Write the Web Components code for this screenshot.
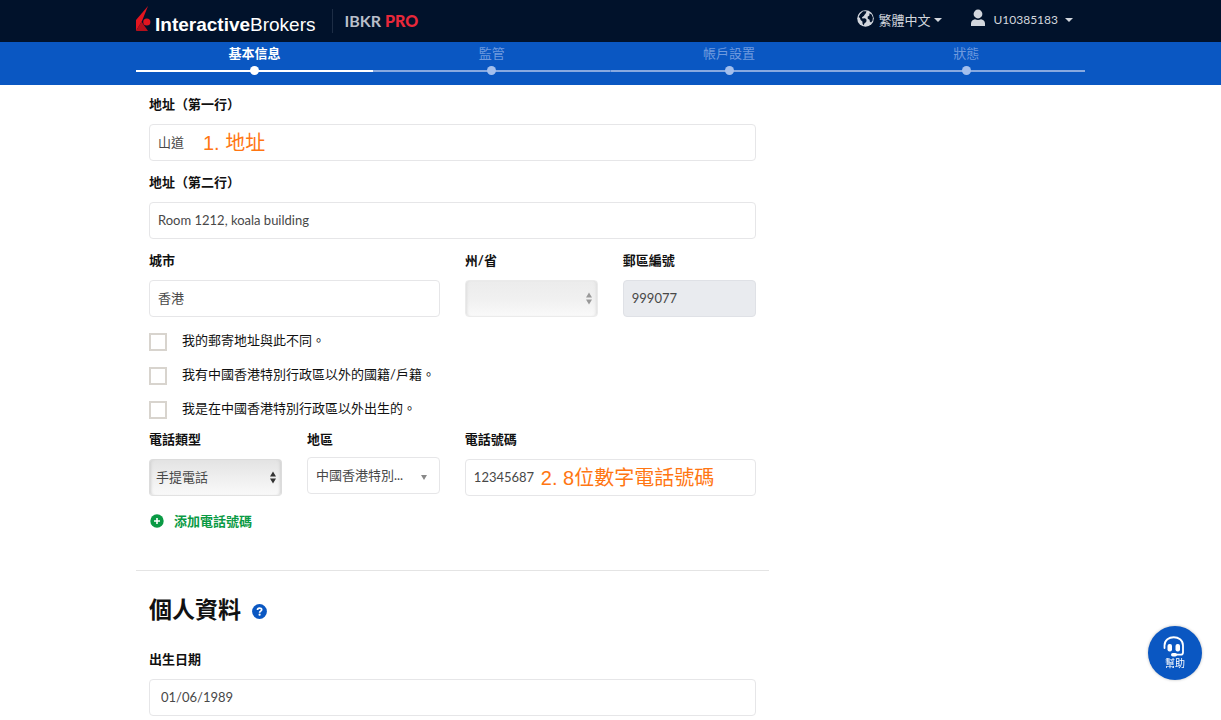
<!DOCTYPE html>
<html lang="zh-Hant">
<head>
<meta charset="utf-8">
<meta name="viewport" content="width=device-width, initial-scale=1">
<title>InteractiveBrokers</title>
<style>
  :root {
    --navy: #01122b;
    --blue: #0a57c2;
    --green: #0a9a44;
    --red: #e8283a;
    --note: #ff7612;
    --line: #e6e6e8;
    --page: 949px;
  }
  body {
    margin: 0;
    background: #fff;
    color: #111;
    font: 13px/20px Lato, "Noto Sans CJK TC", sans-serif;
  }
</style>
</head>
<body>
<app-header user="U10385183"></app-header>
<step-bar>
  <step-item active>基本信息</step-item>
  <step-item>監管</step-item>
  <step-item>帳戶設置</step-item>
  <step-item>狀態</step-item>
</step-bar>
<form-page>
  <form-grid>
    <text-field span="4" label="地址（第一行）" value="山道" note="1. 地址" style="--note-left:54px"></text-field>
    <text-field span="4" label="地址（第二行）" value="Room 1212, koala building"></text-field>
    <text-field span="2" label="城市" value="香港"></text-field>
    <select-field label="州/省" disabled></select-field>
    <text-field label="郵區編號" value="999077" disabled></text-field>
  </form-grid>
  <check-list>
    <check-field>我的郵寄地址與此不同。</check-field>
    <check-field>我有中國香港特別行政區以外的國籍/戶籍。</check-field>
    <check-field>我是在中國香港特別行政區以外出生的。</check-field>
  </check-list>
  <form-grid>
    <select-field label="電話類型" value="手提電話"></select-field>
    <select-field label="地區" value="中國香港特別..." kind="plain"></select-field>
    <text-field span="2" label="電話號碼" value="12345687" note="2. 8位數字電話號碼" style="--note-left:76px"></text-field>
  </form-grid>
  <add-button>添加電話號碼</add-button>
  <section-title>個人資料</section-title>
  <form-grid>
    <text-field span="4" label="出生日期" value="01/06/1989" style="--pad:11px"></text-field>
  </form-grid>
</form-page>
<help-button>幫助</help-button>

<script>
class Base extends HTMLElement {
  connectedCallback() {
    if (this.shadowRoot) return;
    this.attachShadow({ mode: "open" }).innerHTML =
      `<style>*{box-sizing:border-box}${this.css()}</style>${this.html()}`;
  }
  css() { return ":host{display:block}"; }
  html() { return "<slot></slot>"; }
  attr(name) { return this.getAttribute(name) || ""; }
}

customElements.define("app-header", class extends Base {
  css() { return `
    :host{display:block;background:var(--navy);color:#d3d7de}
    header{max-width:var(--page);height:42px;margin:0 auto;display:flex;align-items:center}
    .logo{display:flex;height:30px;gap:4px;color:#fff;text-decoration:none;font:19px/22px "Liberation Sans",sans-serif}
    .logo svg{flex:none}
    .logo span{align-self:flex-end}
    .product{margin-left:16px;padding-left:12px;border-left:1px solid #1d2d45;height:24px;font-size:16px;line-height:24px;color:#b9bfca;font-weight:700}
    .product b{color:var(--red)}
    nav{margin-left:auto;display:flex;align-items:center;padding:0 12px 2px 0;gap:28px}
    button{display:flex;align-items:center;border:0;padding:0;background:none;color:inherit;font:inherit}
    .icon{margin:0 4px 4px 0}
    .user{font-size:12px}
    .user .icon{margin-right:7px}
    .caret{margin-left:4px}
    .user .caret{margin-left:7px}`; }
  html() {
    const caret = `<svg class="caret" width="8" height="4" viewBox="0 0 8 4" aria-hidden="true"><path fill="currentColor" d="M0 0h8L4 4z"/></svg>`;
    return `<header>
      <a class="logo" href="#"><svg width="15" height="26" viewBox="0 0 15 26" aria-hidden="true">
        <path fill="#e3151f" d="M12 0 0 14v11l6-10z"/><path fill="#b3101c" d="M0 25l5.500-9.500L12 25z"/><circle cx="10.800" cy="16" r="3.600" fill="#e3151f"/></svg>
        <span><b>Interactive</b>Brokers</span></a>
      <div class="product">IBKR <b>PRO</b></div>
      <nav>
        <button type="button"><svg class="icon" width="17" height="17" viewBox="0 0 17 17" aria-hidden="true">
          <circle cx="8.500" cy="8.500" r="8.300" fill="#d3d7de"/>
          <path fill="#01122b" d="M6 1.300 9.400 1.200 9 3 7.600 4.800 6.800 6 5 7.200 5.400 8.400 8 8.200 9.600 9.800 9.200 12 7.500 13.300 6.800 15.300 5.600 14 5.400 11.500 3.600 10 3 8 1.600 6.900 3 4.200z"/>
          <path fill="#01122b" d="M12.400 3.200 14.600 4.400 15.900 7.500 15.500 10.800 14 12.400 12.800 11.600 12.600 9.800 10.800 8.800 10.600 6.800 12.400 5.600z"/></svg>繁體中文${caret}</button>
        <button type="button" class="user"><svg class="icon" width="16" height="18" viewBox="0 0 16 18" aria-hidden="true">
          <circle cx="8" cy="5" r="4.400" fill="currentColor"/><path fill="currentColor" d="M1 17v-2.500C1 12 3 10.700 5 10.300c2 1 4 1 6 0 2 .4 4 1.700 4 4.200V17z"/></svg>${this.attr("user")}${caret}</button>
      </nav></header>`;
  }
});

customElements.define("step-bar", class extends Base {
  css() { return `
    :host{display:block;background:var(--blue);height:43px}
    div{max-width:var(--page);margin:0 auto;display:grid;grid-template-columns:repeat(4,1fr)}`; }
  html() { return `<div role="list"><slot></slot></div>`; }
});

customElements.define("step-item", class extends Base {
  css() { return `
    :host{display:block;text-align:center;color:#6f9ade;padding-top:1px}
    :host([active]){color:#fff;font-weight:700}
    .track{display:grid;place-items:center;height:9px;margin-top:3px;background:linear-gradient(#87a9e0,#87a9e0) center/100% 2px no-repeat}
    i{width:9px;height:9px;border-radius:50%;background:#a3bfed}
    :host([active]) .track{background-image:linear-gradient(#fff,#fff)}
    :host([active]) i{background:#fff}`; }
  html() { return `<slot></slot><div class="track"><i></i></div>`; }
});

customElements.define("form-page", class extends Base {
  css() { return `
    :host{display:block;max-width:var(--page);margin:0 auto}
    main{width:66.67%;padding:9px 13px 5px}
    @media (max-width:700px){main{width:100%}}`; }
  html() { return `<main><slot></slot></main>`; }
});

customElements.define("form-grid", class extends Base {
  css() { return `:host{display:grid;grid-template-columns:repeat(4,minmax(0,1fr));gap:11px 25px}`; }
});

const fieldCss = `
  :host{display:block}
  :host([span="2"]){grid-column:span 2}
  :host([span="4"]){grid-column:span 4}
  label{display:block;font-weight:700;margin-bottom:10px;white-space:nowrap}
  .box{position:relative}
  input,select{display:block;width:100%;height:37px;margin:0;border:1px solid var(--line);border-radius:4px;
    background:#fff;color:#484848;font:inherit;padding:0 var(--pad,8px) 2px;outline:0;opacity:1}`;

customElements.define("text-field", class extends Base {
  css() { return fieldCss + `
    input:disabled{background:#e9ebef;border-color:#dfe1e6}
    .note{position:absolute;left:var(--note-left);top:0;font:20px/38px "Liberation Sans","Noto Sans CJK TC",sans-serif;color:var(--note);white-space:nowrap;pointer-events:none}`; }
  html() {
    const note = this.attr("note");
    return `<label for="f">${this.attr("label")}</label><div class="box">
      <input id="f" type="text" value="${this.attr("value")}"${this.hasAttribute("disabled") ? " disabled" : ""}>
      ${note ? `<span class="note">${note}</span>` : ""}</div>`;
  }
});

customElements.define("select-field", class extends Base {
  css() { return fieldCss + `
    select{appearance:none;padding:0 20px 2px 6px;border-color:#dcdcdc #dcdcdc #e2e2e2;
      background:linear-gradient(#e3e3e3,#efefef 50%,#f9f9f9);box-shadow:inset 3px 0 3px -2px #d0d0d0,inset -3px 0 3px -2px #d0d0d0}
    select:disabled{background:linear-gradient(#ececec,#f0f0f0 50%,#f9f9f9);border-color:#ebebeb;box-shadow:inset 3px 0 3px -2px #ddd,inset -3px 0 3px -2px #ddd}
    svg{position:absolute;right:6px;top:12px;color:#333;pointer-events:none}
    :host([disabled]) svg{color:#999}
    :host([kind="plain"]) label{margin-bottom:8px}
    :host([kind="plain"]) select{background:#fff;border-color:var(--line);box-shadow:none;padding-left:8px}
    :host([kind="plain"]) svg{right:13px;top:18px;color:#888}`; }
  html() {
    const arrow = this.attr("kind") === "plain"
      ? `<svg width="6" height="5" viewBox="0 0 6 5" aria-hidden="true"><path fill="currentColor" d="M0 0h6L3 5z"/></svg>`
      : `<svg width="6" height="13" viewBox="0 0 6 13" aria-hidden="true"><path fill="currentColor" d="M0 5.500h6L3 .5zM0 7.500h6l-3 5z"/></svg>`;
    return `<label for="f">${this.attr("label")}</label><div class="box">
      <select id="f"${this.hasAttribute("disabled") ? " disabled" : ""}><option>${this.attr("value")}</option></select>${arrow}</div>`;
  }
});

customElements.define("check-list", class extends Base {
  css() { return `:host{display:grid;gap:12px;padding:13px 0 9px}`; }
});

customElements.define("check-field", class extends Base {
  css() { return `
    :host{display:block}
    label{display:flex;gap:15px;height:22px}
    input{appearance:none;flex:none;width:18px;height:18px;margin:3px 0 0;border:2px solid #d8d4ce;background:#fff}
    input:checked{background:var(--blue)}`; }
  html() { return `<label><input type="checkbox"><span><slot></slot></span></label>`; }
});

customElements.define("add-button", class extends Base {
  css() { return `
    :host{display:block;padding:15px 0 39px}
    button{display:flex;align-items:center;gap:10px;border:0;background:none;padding:0 0 0 1px;color:var(--green);font:inherit;font-weight:700}`; }
  html() { return `<button type="button"><svg width="14" height="14" viewBox="0 0 14 14" aria-hidden="true"><circle cx="7" cy="7" r="6.700" fill="currentColor"/><path stroke="#fff" stroke-width="1.600" d="M7 4v6M4 7h6"/></svg><slot></slot></button>`; }
});

customElements.define("section-title", class extends Base {
  css() { return `
    :host{display:block;margin:0 -13px;padding:21px 13px 23px;border-top:1px solid #e4e4e4}
    div{display:flex;align-items:center;gap:11px}
    h2{margin:0;font-size:23px;line-height:34px;font-weight:700}
    button{display:block;border:0;padding:4px 0 0;background:none;line-height:0}`; }
  html() { return `<div><h2><slot></slot></h2><button type="button" aria-label="說明"><svg width="15" height="15" viewBox="0 0 15 15" aria-hidden="true">
    <circle cx="7.500" cy="7.500" r="7.400" fill="#0a57c2"/><path fill="none" stroke="#fff" stroke-width="1.700" d="M5.500 6c0-2.600 4.200-2.500 4.200-.2 0 1.400-2.100 1.300-2.100 2.900"/><circle cx="7.600" cy="10.700" r="1.100" fill="#fff"/></svg></button></div>`; }
});

customElements.define("help-button", class extends Base {
  css() { return `
    :host{position:fixed;right:19px;bottom:40px}
    button{display:flex;flex-direction:column;align-items:center;width:54px;height:54px;border:0;border-radius:50%;padding:10px 0 0;
      background:var(--blue);color:#fff;font:inherit;font-size:10px;line-height:13px;box-shadow:0 0 3px #0004}`; }
  html() { return `<button type="button"><svg width="24" height="21" viewBox="0 0 24 21" aria-hidden="true">
    <path fill="none" stroke="currentColor" stroke-width="1.800" stroke-linecap="round" d="M1.500 12V9.500C1.500-1.500 20-1.500 20 9.500v7q0 2.200-2.200 2.200H11"/>
    <rect x="4.500" y="8" width="4.500" height="7.500" rx="2" fill="currentColor"/><rect x="12.500" y="8" width="4.500" height="7.500" rx="2" fill="currentColor"/>
    <rect x="8" y="17" width="6" height="3.600" rx="1.800" fill="currentColor"/></svg><slot></slot></button>`; }
});
</script>
</body>
</html>
